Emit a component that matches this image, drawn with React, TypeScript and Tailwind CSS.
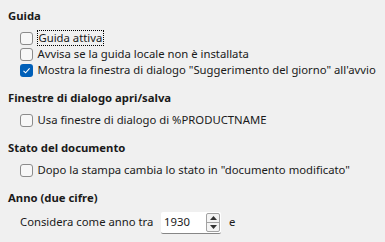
import React from 'react';

const Box: React.FC<{ checked?: boolean }> = ({ checked }) =>
  checked ? (
    <span className="w-[13px] h-[13px] rounded-[3px] bg-[#005fb8] flex items-center justify-center shrink-0">
      <svg width="9" height="9" viewBox="0 0 9 9">
        <path d="M1.5 4.8 L3.6 6.8 L7.6 2.4" fill="none" stroke="white" strokeWidth="1.1" />
      </svg>
    </span>
  ) : (
    <span className="w-[13px] h-[13px] rounded-[3px] border border-[#8b8b8b] bg-[#f7f7f7] shrink-0" />
  );

const Check: React.FC<{ label: string; checked?: boolean; focus?: boolean }> = ({ label, checked, focus }) => (
  <div className="flex items-center h-[16px] pl-[19.5px] gap-[5px] whitespace-nowrap">
    <Box checked={checked} />
    <span className={focus ? 'outline-1 outline-dotted outline-black px-[1px] leading-[14px]' : 'leading-[14px]'}>{label}</span>
  </div>
);

const Head: React.FC<{ children: React.ReactNode }> = ({ children }) => (
  <div className="font-bold pl-[8px] h-[16px] leading-[16px] whitespace-nowrap">{children}</div>
);

export default function App() {
  return (
    <div
      className="w-[385px] h-[242px] bg-[#f0f0f0] text-[#1a1a1a] text-[11.3px] pt-[8px] overflow-hidden"
      style={{ fontFamily: '"Noto Sans", "Open Sans", sans-serif' }}
    >
      <Head>Guida</Head>
      <div className="mt-[6px] flex flex-col">
        <Check label="Guida attiva" focus />
        <Check label="Avvisa se la guida locale non è installata" />
        <Check label={'Mostra la finestra di dialogo "Suggerimento del giorno" all\'avvio'} checked />
      </div>
      <div className="mt-[12px]">
        <Head>Finestre di dialogo apri/salva</Head>
      </div>
      <div className="mt-[6px]">
        <Check label="Usa finestre di dialogo di %PRODUCTNAME" />
      </div>
      <div className="mt-[12px]">
        <Head>Stato del documento</Head>
      </div>
      <div className="mt-[6px]">
        <Check label={'Dopo la stampa cambia lo stato in "documento modificato"'} />
      </div>
      <div className="mt-[12px]">
        <Head>Anno (due cifre)</Head>
      </div>
      <div className="mt-[5.5px] flex items-center h-[22.5px] pl-[20px] whitespace-nowrap">
        <span className="w-[141px]">Considera come anno tra</span>
        <div className="flex items-center h-full w-[60px] bg-white border-b border-[#868686] rounded-[2px]">
          <span className="flex-1 pl-[3px]">1930</span>
          <div className="w-[14px] h-[19px] mr-[1px] flex flex-col border border-[#a2a2a2] rounded-[2px] bg-[#f4f4f4]">
            <span className="flex-1 flex items-center justify-center border-b border-[#a2a2a2]">
              <svg width="7" height="4" viewBox="0 0 7 4"><path d="M0 4 L3.5 0 L7 4 Z" fill="#333" /></svg>
            </span>
            <span className="flex-1 flex items-center justify-center">
              <svg width="7" height="4" viewBox="0 0 7 4"><path d="M0 0 L3.5 4 L7 0 Z" fill="#333" /></svg>
            </span>
          </div>
        </div>
        <span className="ml-[8px]">e</span>
      </div>
    </div>
  );
}
